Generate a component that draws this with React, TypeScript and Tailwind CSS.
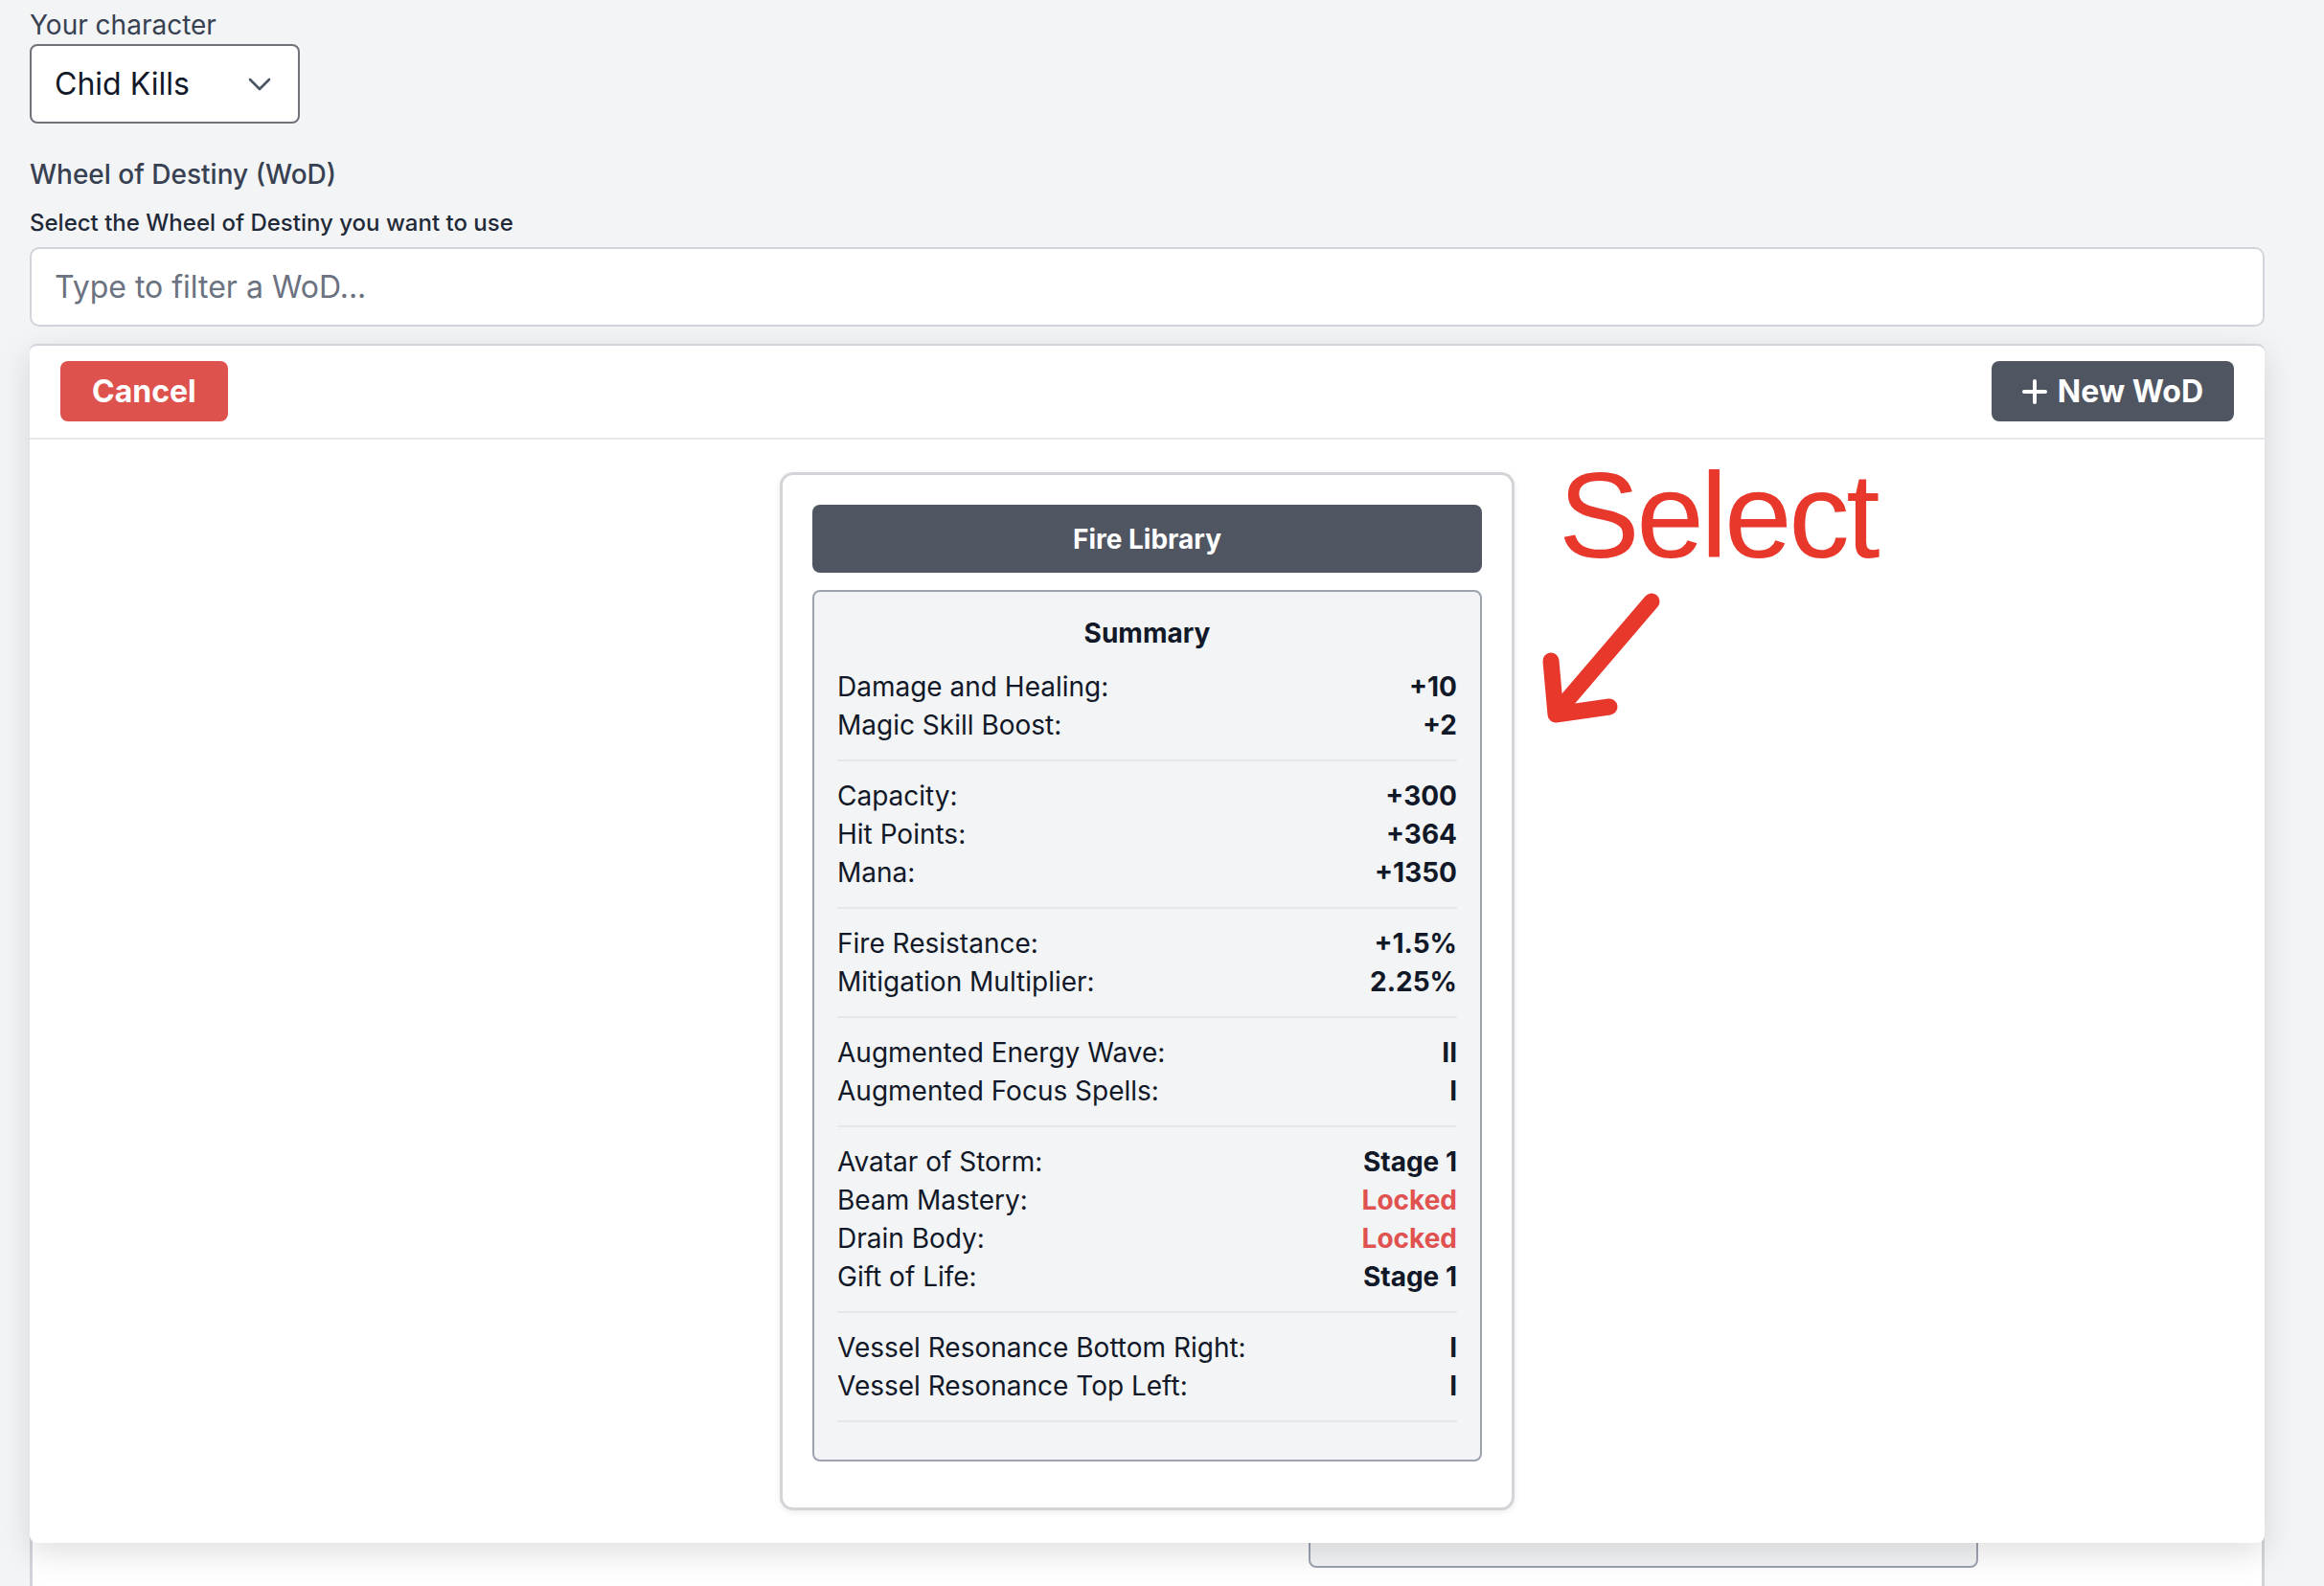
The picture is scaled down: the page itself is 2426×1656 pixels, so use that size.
import React from "react";

type Row = { label: string; value: string; locked?: boolean };

const groups: Row[][] = [
  [
    { label: "Damage and Healing:", value: "+10" },
    { label: "Magic Skill Boost:", value: "+2" },
  ],
  [
    { label: "Capacity:", value: "+300" },
    { label: "Hit Points:", value: "+364" },
    { label: "Mana:", value: "+1350" },
  ],
  [
    { label: "Fire Resistance:", value: "+1.5%" },
    { label: "Mitigation Multiplier:", value: "2.25%" },
  ],
  [
    { label: "Augmented Energy Wave:", value: "II" },
    { label: "Augmented Focus Spells:", value: "I" },
  ],
  [
    { label: "Avatar of Storm:", value: "Stage 1" },
    { label: "Beam Mastery:", value: "Locked", locked: true },
    { label: "Drain Body:", value: "Locked", locked: true },
    { label: "Gift of Life:", value: "Stage 1" },
  ],
  [
    { label: "Vessel Resonance Bottom Right:", value: "I" },
    { label: "Vessel Resonance Top Left:", value: "I" },
  ],
];

function Chevron() {
  return (
    <svg width="24" height="14" viewBox="0 0 24 14" fill="none">
      <polyline
        points="2,2 12,12 22,2"
        stroke="#4b5563"
        strokeWidth="2.6"
        strokeLinecap="round"
        strokeLinejoin="round"
      />
    </svg>
  );
}

function PlusIcon() {
  return (
    <svg width="26" height="26" viewBox="0 0 26 26" fill="none">
      <line x1="13" y1="2" x2="13" y2="24" stroke="white" strokeWidth="4" strokeLinecap="round" />
      <line x1="2" y1="13" x2="24" y2="13" stroke="white" strokeWidth="4" strokeLinecap="round" />
    </svg>
  );
}

export default function App() {
  return (
    <div className="h-[1656px] w-full overflow-hidden bg-[#f3f4f6] pl-[31px] pr-[62px] font-['Inter',sans-serif]">
      <div className="pt-[6px] text-[28px] leading-[40px] text-[#374151]">Your character</div>
      <div className="flex h-[83px] w-[282px] items-center justify-between rounded-[8px] border-2 border-[#71717a] bg-white pl-[24px] pr-[28px]">
        <span className="text-[32px] leading-[48px] text-[#111827]">Chid Kills</span>
        <Chevron />
      </div>

      <div className="mt-[33px] text-[28px] font-medium leading-[40px] text-[#374151]">
        Wheel of Destiny (WoD)
      </div>
      <div className="mt-[15px] text-[24px] font-medium leading-[32px] text-[#1f2937]">
        Select the Wheel of Destiny you want to use
      </div>
      <input
        className="mt-[9px] block h-[83px] w-full rounded-[10px] border-2 border-[#d1d5db] bg-white pl-[24px] text-[32px] text-[#111827] outline-none placeholder:text-[#6b7280]"
        placeholder="Type to filter a WoD..."
      />

      <div className="relative mt-[18px]">
        {/* underlying content */}
        <div className="h-[1400px] rounded-t-[8px] border-x-[3px] border-t-2 border-[#d1d5db] bg-white pt-[641px]">
          <div className="ml-[1332px] h-[635px] w-[699px] rounded-b-[8px] border-2 border-[#9ca3af] bg-[#f3f4f6]" />
        </div>

        {/* dropdown panel */}
        <div className="absolute left-0 right-0 top-0 z-10 rounded-[8px] border-t-2 border-[#d1d5db] bg-white shadow-[0_10px_34px_rgba(0,0,0,0.13)]">
          <div className="flex items-center justify-between border-b-2 border-[#e5e7eb] px-[32px] pb-[17px] pt-[16px]">
            <button className="flex h-[63px] items-center rounded-[8px] bg-[#de524d] px-[33px] text-[32px] font-bold leading-[48px] text-white">
              Cancel
            </button>
            <button className="flex h-[63px] items-center gap-[11px] rounded-[8px] bg-[#4f5561] px-[32px] text-[32px] font-bold leading-[48px] text-white">
              <PlusIcon />
              <span>New WoD</span>
            </button>
          </div>

          <div className="relative flex justify-center pb-[34px] pt-[34px]">
            <div className="w-[767px] rounded-[14px] border-[3px] border-[#d4d4d8] bg-white px-[31px] pb-[48px] pt-[31px] shadow-[0_2px_6px_rgba(0,0,0,0.08)]">
              <div className="flex h-[71px] items-center justify-center rounded-[8px] bg-[#4f5561] text-[28px] font-bold leading-[40px] text-white">
                Fire Library
              </div>
              <div className="mt-[18px] rounded-[8px] border-2 border-[#9ca3af] bg-[#f3f4f6] px-[24px] pb-[39px] pt-[23px]">
                <div className="text-center text-[28px] font-bold leading-[40px] text-[#111827]">Summary</div>
                {groups.map((g, gi) => (
                  <div key={gi} className="border-b-2 border-[#e5e7eb] py-[16px]">
                    {g.map((r) => (
                      <div
                        key={r.label}
                        className="flex h-[40px] items-center justify-between text-[28px] leading-[40px] text-[#111827]"
                      >
                        <span>{r.label}</span>
                        <span className={r.locked ? "font-bold text-[#e0524f]" : "font-bold text-[#111827]"}>
                          {r.value}
                        </span>
                      </div>
                    ))}
                  </div>
                ))}
              </div>
            </div>

            {/* annotation */}
            <div className="absolute left-[1596px] top-[16px] font-['Liberation_Sans',Arial,sans-serif] text-[127px] leading-none tracking-[-3.5px] text-[#e8372b]">
              Select
            </div>
            <svg
              className="absolute left-[1569px] top-[151px]"
              width="150"
              height="150"
              viewBox="0 0 150 150"
              fill="none"
            >
              <line x1="124" y1="18" x2="30" y2="128" stroke="#e8372b" strokeWidth="17" strokeLinecap="round" />
              <polyline
                points="19,80 24,136 80,128"
                stroke="#e8372b"
                strokeWidth="17"
                strokeLinecap="round"
                strokeLinejoin="round"
              />
            </svg>
          </div>
        </div>
      </div>
    </div>
  );
}
